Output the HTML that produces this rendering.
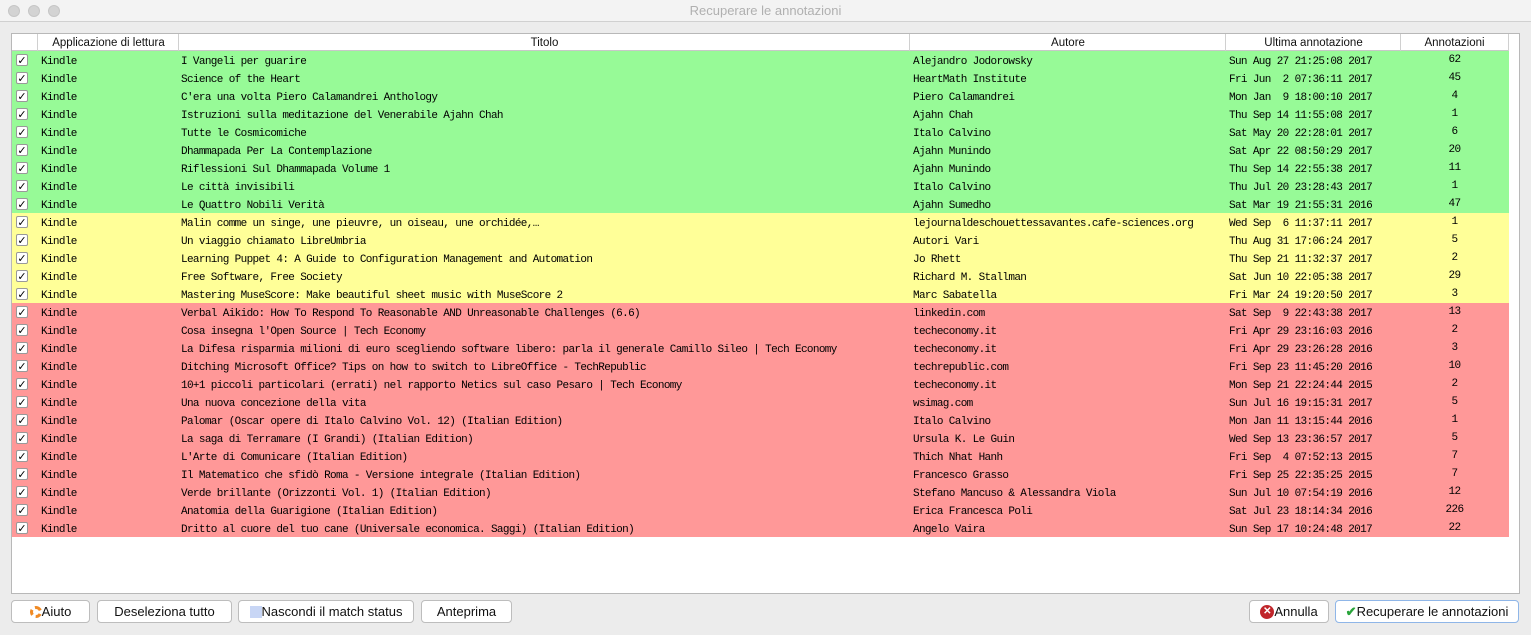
<!DOCTYPE html>
<html><head><meta charset="utf-8"><style>
*{margin:0;padding:0;box-sizing:border-box}
body{width:1531px;height:635px;background:#ececec;font-family:"Liberation Sans",sans-serif;position:relative;overflow:hidden}
.tb{position:absolute;left:0;top:0;width:1531px;height:22px;background:#f3f3f3;border-bottom:1px solid #d0d0d0;text-align:center;font-size:13px;line-height:22px;color:#b0b0b0}
.dot{position:absolute;top:5px;width:12px;height:12px;border-radius:6px;background:#d3d3d3;border:1px solid #c6c6c6}
.tbl{position:absolute;left:11px;top:33px;width:1509px;height:561px;background:#fff;border:1px solid #b8b8b8}
.hd{position:absolute;left:0;top:0;height:17px;width:1497px;border-bottom:1px solid #c8c8c8;font-size:11.5px;line-height:19px;color:#111}
.hd div{position:absolute;top:0;height:17px;border-left:1px solid #d0d0d0;text-align:center}
.r{position:absolute;left:0;width:1497px;height:18px;font-family:"Liberation Mono",monospace;font-size:11px;letter-spacing:-0.64px;line-height:18px;color:#000;white-space:nowrap}
.r span{position:absolute;top:2px}
.cb{position:absolute;left:4px;top:3px;width:12px;height:12px;background:#fff;border:1px solid #999;border-radius:2px;font-size:11px;line-height:11px;text-align:center;font-family:"DejaVu Sans",sans-serif;font-weight:bold;letter-spacing:0}
.g{background:#97fa97}.y{background:#ffff98}.rd{background:#ff9898}
.btn{position:absolute;top:600px;height:23px;background:#fff;border:1px solid #bdbdbd;border-radius:4px;font-size:13px;line-height:21px;text-align:center;color:#111}
.ic{display:inline-block;vertical-align:middle;margin-top:-2px}
</style></head><body>
<div class="tb">Recuperare le annotazioni</div>
<div class="dot" style="left:8px"></div><div class="dot" style="left:28px"></div><div class="dot" style="left:48px"></div>
<div class="tbl">
<div class="hd">
<div style="left:25px;width:142px">Applicazione di lettura</div>
<div style="left:166px;width:732px">Titolo</div>
<div style="left:897px;width:317px">Autore</div>
<div style="left:1213px;width:176px">Ultima annotazione</div>
<div style="left:1388px;width:109px;border-right:1px solid #d0d0d0">Annotazioni</div>
</div>
<div id="rows"></div>
</div>
<div class="btn" style="left:11px;width:79px"><span class="ic" style="width:12px;height:12px;border:3px dashed #f08a24;border-radius:6px"></span>Aiuto</div>
<div class="btn" style="left:97px;width:135px">Deseleziona tutto</div>
<div class="btn" style="left:238px;width:176px"><span class="ic" style="width:12px;height:12px;background:#c8d6f5"></span>Nascondi il match status</div>
<div class="btn" style="left:421px;width:91px">Anteprima</div>
<div class="btn" style="left:1249px;width:80px"><span class="ic" style="width:14px;height:14px;border-radius:7px;background:#c0262b;color:#fff;font-size:10px;line-height:14px;font-weight:bold">✕</span>Annulla</div>
<div class="btn" style="left:1335px;width:184px;border-color:#8fb6e8"><span style="color:#2aa53b;font-weight:bold">✔</span>Recuperare le annotazioni</div>
<script>
var d=[
["g","I Vangeli per guarire","Alejandro Jodorowsky","Sun Aug 27 21:25:08 2017","62"],
["g","Science of the Heart","HeartMath Institute","Fri Jun  2 07:36:11 2017","45"],
["g","C'era una volta Piero Calamandrei Anthology","Piero Calamandrei","Mon Jan  9 18:00:10 2017","4"],
["g","Istruzioni sulla meditazione del Venerabile Ajahn Chah","Ajahn Chah","Thu Sep 14 11:55:08 2017","1"],
["g","Tutte le Cosmicomiche","Italo Calvino","Sat May 20 22:28:01 2017","6"],
["g","Dhammapada Per La Contemplazione","Ajahn Munindo","Sat Apr 22 08:50:29 2017","20"],
["g","Riflessioni Sul Dhammapada Volume 1","Ajahn Munindo","Thu Sep 14 22:55:38 2017","11"],
["g","Le città invisibili","Italo Calvino","Thu Jul 20 23:28:43 2017","1"],
["g","Le Quattro Nobili Verità","Ajahn Sumedho","Sat Mar 19 21:55:31 2016","47"],
["y","Malin comme un singe, une pieuvre, un oiseau, une orchidée,…","lejournaldeschouettessavantes.cafe-sciences.org","Wed Sep  6 11:37:11 2017","1"],
["y","Un viaggio chiamato LibreUmbria","Autori Vari","Thu Aug 31 17:06:24 2017","5"],
["y","Learning Puppet 4: A Guide to Configuration Management and Automation","Jo Rhett","Thu Sep 21 11:32:37 2017","2"],
["y","Free Software, Free Society","Richard M. Stallman","Sat Jun 10 22:05:38 2017","29"],
["y","Mastering MuseScore: Make beautiful sheet music with MuseScore 2","Marc Sabatella","Fri Mar 24 19:20:50 2017","3"],
["rd","Verbal Aikido: How To Respond To Reasonable AND Unreasonable Challenges (6.6)","linkedin.com","Sat Sep  9 22:43:38 2017","13"],
["rd","Cosa insegna l'Open Source | Tech Economy","techeconomy.it","Fri Apr 29 23:16:03 2016","2"],
["rd","La Difesa risparmia milioni di euro scegliendo software libero: parla il generale Camillo Sileo | Tech Economy","techeconomy.it","Fri Apr 29 23:26:28 2016","3"],
["rd","Ditching Microsoft Office? Tips on how to switch to LibreOffice - TechRepublic","techrepublic.com","Fri Sep 23 11:45:20 2016","10"],
["rd","10+1 piccoli particolari (errati) nel rapporto Netics sul caso Pesaro | Tech Economy","techeconomy.it","Mon Sep 21 22:24:44 2015","2"],
["rd","Una nuova concezione della vita","wsimag.com","Sun Jul 16 19:15:31 2017","5"],
["rd","Palomar (Oscar opere di Italo Calvino Vol. 12) (Italian Edition)","Italo Calvino","Mon Jan 11 13:15:44 2016","1"],
["rd","La saga di Terramare (I Grandi) (Italian Edition)","Ursula K. Le Guin","Wed Sep 13 23:36:57 2017","5"],
["rd","L'Arte di Comunicare (Italian Edition)","Thich Nhat Hanh","Fri Sep  4 07:52:13 2015","7"],
["rd","Il Matematico che sfidò Roma - Versione integrale (Italian Edition)","Francesco Grasso","Fri Sep 25 22:35:25 2015","7"],
["rd","Verde brillante (Orizzonti Vol. 1) (Italian Edition)","Stefano Mancuso & Alessandra Viola","Sun Jul 10 07:54:19 2016","12"],
["rd","Anatomia della Guarigione (Italian Edition)","Erica Francesca Poli","Sat Jul 23 18:14:34 2016","226"],
["rd","Dritto al cuore del tuo cane (Universale economica. Saggi) (Italian Edition)","Angelo Vaira","Sun Sep 17 10:24:48 2017","22"]];
var h="";
function e(s){return s.replace(/&/g,"&amp;").replace(/ /g,"&nbsp;")}
d.forEach(function(r,i){h+='<div class="r '+r[0]+'" style="top:'+(17+i*18)+'px"><div class="cb">✓</div><span style="left:29px">Kindle</span><span style="left:169px">'+e(r[1])+'</span><span style="left:901px">'+e(r[2])+'</span><span style="left:1217px">'+e(r[3])+'</span><span style="left:1388px;width:109px;text-align:center;top:0">'+r[4]+'</span></div>'});
document.getElementById("rows").innerHTML=h;
</script>
</body></html>
